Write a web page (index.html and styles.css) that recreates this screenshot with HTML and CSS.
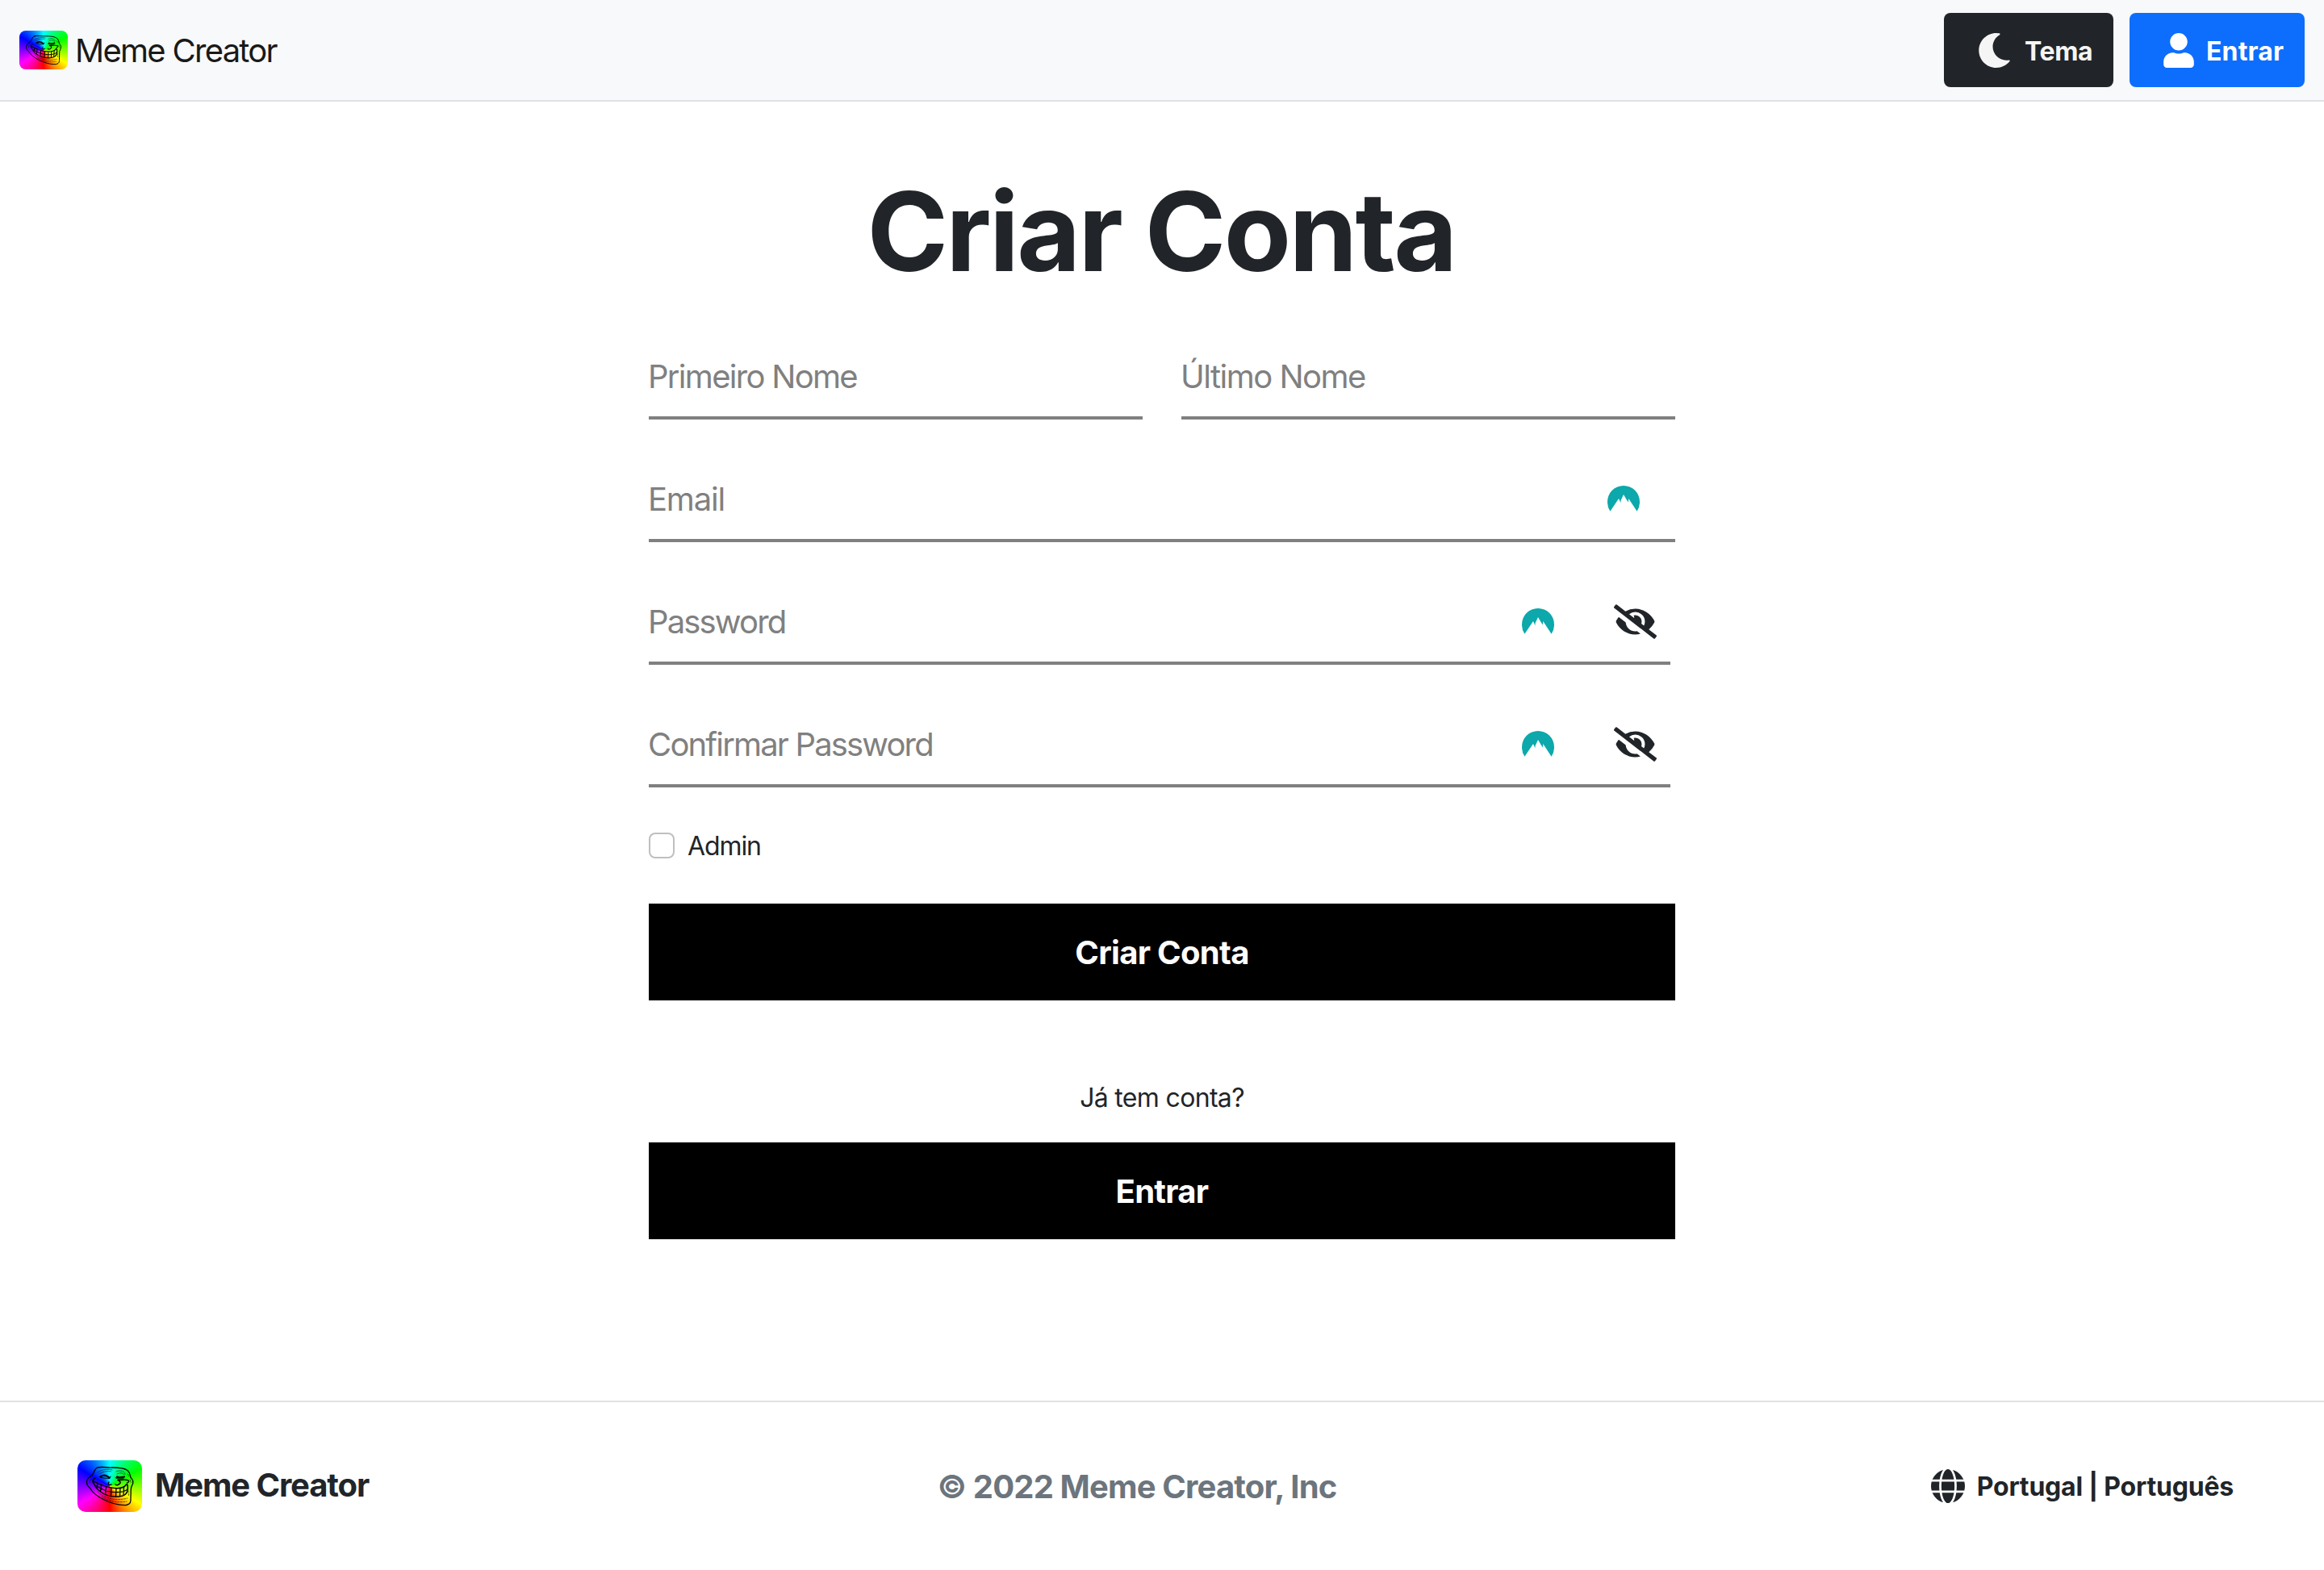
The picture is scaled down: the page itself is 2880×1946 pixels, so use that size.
FILE: index.html
```html
<!DOCTYPE html>
<html lang="pt">
<head>
<meta charset="utf-8">
<title>Meme Creator</title>
<link rel="stylesheet" href="styles.css">
</head>
<body>
<svg class="defs" width="0" height="0">
  <symbol id="troll" viewBox="0 0 80 64">
    <g fill="none" stroke="#000" stroke-linecap="round" stroke-linejoin="round">
      <path stroke-width="1.3" d="M24.500 9C31 7.500 37 9.500 43 9C50 9 58 9.500 62 12.500C65 15 65 18 66 21.500C69 24 69.500 28 67.500 31.500C65.500 34 66.500 40 66 45C66 50 67 54 60.500 55.500C51 56 40 52.500 33 49C25 45 18 39 15.500 34.500C12 31.500 10.500 28 12 24C13.500 21 18 19.500 19.500 16.500C21 13.500 22 10 24.500 9Z"/>
      <path stroke-width="1.500" d="M19 25.500C26 29 33 33 42 34C51 35.500 58 34 60.500 30C62 29 62.500 32 62.300 36C62 42 57 44.500 51 45C43 45.500 34 43.500 28 38.500C23 35 20.500 30 19 25.500Z"/>
      <path stroke-width="1.300" d="M23 31.500C31 37 41 40 50 39.500C55 39.500 59 38.500 62 36M29.500 30.500L28.500 38.500M35.500 32.800L34.500 42.500M42 34.200L41.500 44.500M48 34.800L47.500 45M53 34.500L52.500 44.500M57.500 33L57 42.500M25 29L24 34"/>
      <path stroke-width="1.400" d="M20 29C18.500 26.500 18.500 23.500 21.500 22.500M61.500 28C64.500 26.500 64.500 25 61.500 24.500C58 23 54 25 50 24.500M50 24.500C53 26 54.500 28 51.500 29.500M39 27C37 29.500 39 31 42 30M47 30C49 31.500 51 30.500 52 29"/>
      <path stroke-width="2.200" d="M29 20C32 17.800 36 18.500 39.500 21.500M49 20.500C52 22.500 55 21 58 20.500"/>
      <path stroke-width="1" d="M27 20.500C30 22.500 36 22 40 22.500L41 20M47 21.500C50 24 55 23 57 22.500"/>
      <path stroke-width=".6" stroke-dasharray="3 1" d="M25 15C31 11 38 10.500 43 12M27 17C32 13.500 38 13 42 14M48 14C53 12 58 13 59 17M49 17C53 15 56 15.500 58 18M62 17L64 20M15 28C14.500 26 15.500 24 18 23M65 24L66.500 28"/>
      <path stroke-width=".6" stroke-dasharray="2 1.500" d="M25 39C33 47 47 51 62 47M30 45C38 50.500 49 53 61 51M63 38L63.500 44"/>
    </g>
  </symbol>
  <symbol id="peak" viewBox="0 0 40 32">
    <path fill="#0ca8ab" d="M3.400 31.800A20 20 0 0 1 0 20A20 20 0 0 1 40 20A20 20 0 0 1 36.600 31.800L26.300 16L25.800 20.600L24 17.800L20 11L16.600 18.300L16.400 21.600L15.400 19L14 16Z"/>
  </symbol>
  <symbol id="eye-slash" viewBox="0 0 640 512">
    <path fill="currentColor" d="M320 400c-75.850 0-137.250-58.710-142.900-133.110L72.200 185.820c-13.790 17.300-26.480 35.590-36.720 55.590a32.350 32.350 0 0 0 0 29.190C89.710 376.410 197.070 448 320 448c26.910 0 52.870-4 77.890-10.460L346 397.390a144.130 144.130 0 0 1-26 2.610zm313.820 58.100l-110.550-85.440a331.250 331.250 0 0 0 81.250-102.070 32.350 32.350 0 0 0 0-29.190C550.290 135.590 442.930 64 320 64a308.150 308.150 0 0 0-147.320 37.700L45.460 3.370A16 16 0 0 0 23 6.180L3.370 31.450A16 16 0 0 0 6.180 53.900l588.360 454.730a16 16 0 0 0 22.460-2.810l19.640-25.270a16 16 0 0 0-2.820-22.450zm-183.720-142l-39.300-30.380A94.750 94.750 0 0 0 416 256a94.760 94.760 0 0 0-121.310-92.210A47.650 47.650 0 0 1 304 192a46.640 46.640 0 0 1-1.540 10l-73.610-56.890A142.310 142.310 0 0 1 320 112a143.920 143.920 0 0 1 144 144c0 21.630-5.290 41.790-13.900 60.110z"/>
  </symbol>
</svg>

<header class="navbar">
  <a class="brand">
    <span class="logo"><svg class="logo__face"><use href="#troll"/></svg></span>
    <span class="brand__name">Meme Creator</span>
  </a>
  <nav class="navbar__actions">
    <a class="btn btn--dark">
      <svg class="btn__moon" viewBox="0 0 512 512"><path fill="currentColor" d="M283.211 512c78.962 0 151.079-35.925 198.857-94.792 7.068-8.708-.639-21.430-11.562-19.350-124.203 23.654-238.262-71.576-238.262-196.954 0-72.222 38.662-138.635 101.498-174.394 9.686-5.512 7.250-20.197-3.756-22.230A258.156 258.156 0 0 0 283.211 0c-141.309 0-256 114.511-256 256 0 141.309 114.511 256 256 256z"/></svg>
      <span class="btn__label">Tema</span>
    </a>
    <a class="btn btn--primary">
      <svg class="btn__user" viewBox="0 0 448 512"><path fill="currentColor" d="M224 256c70.700 0 128-57.300 128-128S294.700 0 224 0 96 57.300 96 128s57.300 128 128 128zm89.600 32h-16.700c-22.200 10.200-46.900 16-72.900 16s-50.600-5.800-72.900-16h-16.700C60.200 288 0 348.200 0 422.400V464c0 26.500 21.500 48 48 48h352c26.500 0 48-21.500 48-48v-41.600c0-74.200-60.200-134.400-134.400-134.400z"/></svg>
      <span class="btn__label">Entrar</span>
    </a>
  </nav>
</header>

<main class="page">
  <h1 class="title">Criar Conta</h1>
  <form class="form">
    <div class="form__row">
      <div class="field"><label class="field__label">Primeiro Nome</label></div>
      <div class="field"><label class="field__label field__label--last">Último Nome</label></div>
    </div>
    <div class="field field--email">
      <label class="field__label">Email</label>
      <svg class="peak"><use href="#peak"/></svg>
    </div>
    <div class="field field--password">
      <label class="field__label">Password</label>
      <svg class="peak"><use href="#peak"/></svg>
      <svg class="eye"><use href="#eye-slash"/></svg>
    </div>
    <div class="field field--password">
      <label class="field__label">Confirmar Password</label>
      <svg class="peak"><use href="#peak"/></svg>
      <svg class="eye"><use href="#eye-slash"/></svg>
    </div>
    <div class="check"><span class="check__box"></span><label class="check__label">Admin</label></div>
    <button class="submit" type="button">Criar Conta</button>
    <p class="hint">Já tem conta?</p>
    <button class="submit" type="button">Entrar</button>
  </form>
</main>

<footer class="footer">
  <a class="footer__brand">
    <span class="logo logo--large"><svg class="logo__face"><use href="#troll"/></svg></span>
    <span class="footer__name">Meme Creator</span>
  </a>
  <span class="footer__copy">© 2022 Meme Creator, Inc</span>
  <a class="footer__locale">
    <svg class="globe" viewBox="0 8 496 496"><path fill="currentColor" d="M336.500 160C322 70.700 287.800 8 248 8s-74 62.700-88.500 152h177zM152 256c0 22.200 1.200 43.500 3.300 64h185.300c2.100-20.500 3.300-41.800 3.300-64s-1.200-43.500-3.300-64H155.300c-2.100 20.500-3.300 41.800-3.300 64zm324.700-96c-28.600-67.900-86.500-120.400-158-141.600 24.400 33.800 41.200 84.700 50 141.600h108zM177.200 18.400C105.800 39.600 47.800 92.100 19.300 160h108c8.700-56.900 25.500-107.800 49.900-141.600zM487.400 192H372.700c2.100 21 3.300 42.500 3.300 64s-1.200 43-3.300 64h114.600c5.500-20.500 8.600-41.800 8.600-64s-3.100-43.500-8.500-64zM120 256c0-21.500 1.200-43 3.300-64H8.600C3.200 212.500 0 233.800 0 256s3.200 43.500 8.600 64h114.600c-2-21-3.200-42.500-3.200-64zm39.500 96c14.500 89.300 48.700 152 88.500 152s74-62.700 88.500-152h-177zm159.300 141.600c71.400-21.200 129.400-73.700 158-141.600h-108c-8.800 56.900-25.600 107.800-50 141.600zM19.300 352c28.600 67.900 86.500 120.400 158 141.600-24.400-33.800-41.200-84.700-50-141.600h-108z"/></svg>
    <span class="footer__lang">Portugal | Português</span>
  </a>
</footer>
</body>
</html>
```
FILE: styles.css
```css
* { box-sizing: border-box; }
body {
  margin: 0;
  min-height: 1946px;
  display: flex;
  flex-direction: column;
  background: #fff;
  color: #212529;
  font-family: Inter, "Liberation Sans", sans-serif;
  font-size: 32px;
  line-height: 48px;
}
.defs { position: absolute; }
svg { display: block; flex: none; }

.navbar {
  display: flex;
  justify-content: space-between;
  align-items: center;
  height: 126px;
  padding: 0 24px;
  background: #f8f9fa;
  border-bottom: 2px solid #dee2e6;
}
.brand { display: flex; align-items: center; gap: 9px; color: #191919; }
.brand__name { padding-top: 2px; font-size: 40px; letter-spacing: -1.72px; }
.logo {
  width: 60px;
  height: 48px;
  border-radius: 8px;
  background: conic-gradient(from 180deg, #f00, #f0f, #00f, #0ff, #0f0, #ff0, #f00);
}
.logo__face { width: 100%; height: 100%; }
.logo--large { width: 80px; height: 64px; border-radius: 10px; }

.navbar__actions { display: flex; gap: 20px; }
.btn {
  display: flex;
  align-items: center;
  height: 92px;
  border-radius: 8px;
  color: #fff;
  font-weight: 700;
}
.btn--dark { width: 210px; padding-left: 41px; gap: 16px; background: #212529; color: #f5f5f5; }
.btn--primary { width: 217px; padding-left: 42px; gap: 15px; background: #0d6efd; }
.btn__moon { width: 43px; height: 43px; }
.btn__user { width: 38px; height: 43px; }
.btn__label { padding-top: 4px; }
.btn--dark .btn__label { letter-spacing: -.38px; }
.btn--primary .btn__label { letter-spacing: .15px; }

.page { width: 1272px; margin: 0 auto; padding-top: 75px; flex: 1; }
.title {
  margin: 0 0 47px;
  padding-right: 2px;
  font-size: 136px;
  line-height: 172px;
  font-weight: 700;
  letter-spacing: -2.66px;
  text-align: center;
  white-space: nowrap;
}
.form__row { display: grid; grid-template-columns: 1fr 1fr; gap: 48px; }
.field {
  display: flex;
  align-items: center;
  height: 100px;
  margin-bottom: 52px;
  padding-bottom: 4px;
  border-bottom: 4px solid #808080;
}
.field__label {
  flex: 1;
  margin-left: -1px;
  padding-top: 2px;
  font-size: 40px;
  letter-spacing: -1.7px;
  color: #808080;
  white-space: nowrap;
}
.field__label--last { letter-spacing: -1.52px; }
.field--email { padding-right: 44px; }
.field--email .field__label { letter-spacing: -1.2px; }
.field--password { width: 1266px; padding-right: 17px; }
.field--password .field__label { letter-spacing: -1.84px; }
.peak { width: 40px; height: 32px; }
.eye { width: 53px; height: 43px; margin-left: 74px; }

.check { display: flex; align-items: center; gap: 16px; height: 48px; margin: -4px 0 48px; }
.check__box { width: 32px; height: 32px; border: 2px solid #bfbfbf; border-radius: 8px; }
.check__label { padding-top: 2px; letter-spacing: -1.1px; }
.submit {
  display: block;
  width: 100%;
  height: 120px;
  padding: 2px 0 0;
  border: 0;
  background: #000;
  color: #fff;
  font: 700 40px/60px Inter, "Liberation Sans", sans-serif;
  letter-spacing: -.7px;
}
.hint { margin: 97px 0 31px; text-align: center; letter-spacing: -.67px; }

.footer {
  display: flex;
  align-items: center;
  justify-content: space-between;
  height: 210px;
  padding: 0 112px 0 96px;
  border-top: 2px solid #dee2e6;
}
.footer__brand { display: flex; align-items: center; gap: 16px; }
.footer__name { padding-bottom: 2px; font-size: 40px; font-weight: 700; letter-spacing: -1.1px; }
.footer__copy {
  margin-right: 32px;
  padding-top: 2px;
  font-size: 40px;
  font-weight: 700;
  letter-spacing: -.84px;
  color: #6c757d;
}
.footer__locale { display: flex; align-items: center; gap: 15px; font-weight: 700; }
.footer__lang { padding-top: 2px; letter-spacing: -.21px; }
.globe { width: 42px; height: 42px; }
```
